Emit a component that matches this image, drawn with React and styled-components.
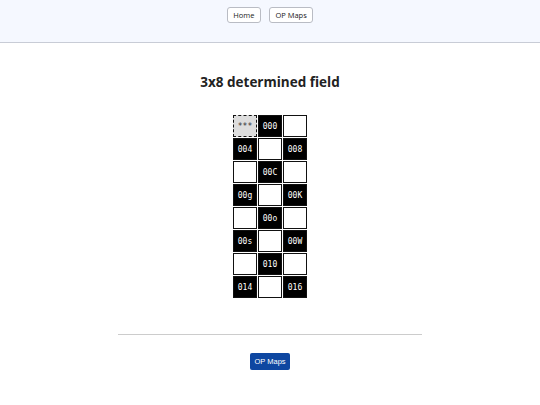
import React from 'react'
import styled, { createGlobalStyle } from 'styled-components'

const GlobalStyle = createGlobalStyle`
    body {
        margin: 0;
        background: #fff;
        font-family: "Open Sans", "Noto Sans", sans-serif;
    }
`
const Header = styled.header`
    display: flex;
    justify-content: center;
    align-items: flex-start;
    gap: 8px;
    height: 43px;
    padding-top: 7px;
    box-sizing: border-box;
    background: #f5f8ff;
    border-bottom: 1px solid #c8ccd6;
`
const NavButton = styled.button`
    height: 14px;
    box-sizing: content-box;
    padding: 0 5.5px;
    border: 1px solid #b9bcc4;
    border-radius: 3px;
    background: #fff;
    color: #222;
    font-family: "Open Sans", sans-serif;
    font-size: 7.5px;
    line-height: 14px;
`
const Main = styled.main`
    display: flex;
    flex-direction: column;
    align-items: center;
`
const Title = styled.h1`
    margin: 28px 0 0;
    font-size: 13.5px;
    line-height: 22px;
    font-weight: 700;
    color: #222;
`
const Field = styled.div`
    margin-top: 22px;
    display: grid;
    grid-template-columns: repeat(3, 24px);
    grid-auto-rows: 22px;
    gap: 1px;
`
const Cell = styled.div`
    box-sizing: border-box;
    display: flex;
    align-items: center;
    justify-content: center;
    font-family: "DejaVu Sans Mono", monospace;
    font-size: 8px;
    border: 1px ${p => (p.$mod === 'start' ? 'dashed' : 'solid')} #111;
    background: ${p => (p.$mod === 'on' ? '#000' : p.$mod === 'start' ? '#ddd' : '#fff')};
    color: ${p => (p.$mod === 'on' ? '#fff' : '#333')};
`
const Rule = styled.hr`
    width: 304px;
    margin: 36px 0 0;
    border: 0;
    border-top: 1px solid #ccc;
`
const MapsButton = styled.button`
    margin-top: 18px;
    height: 17px;
    box-sizing: content-box;
    padding: 0 4.5px;
    border: 0;
    border-radius: 2px;
    background: #0e47a1;
    color: #fff;
    font-family: "Liberation Sans", Arial, sans-serif;
    font-size: 7.5px;
    line-height: 17px;
`

const cells = [
    ['***', 'start'], ['000', 'on'], ['', 'off'],
    ['004', 'on'], ['', 'off'], ['008', 'on'],
    ['', 'off'], ['00C', 'on'], ['', 'off'],
    ['00g', 'on'], ['', 'off'], ['00K', 'on'],
    ['', 'off'], ['00o', 'on'], ['', 'off'],
    ['00s', 'on'], ['', 'off'], ['00W', 'on'],
    ['', 'off'], ['010', 'on'], ['', 'off'],
    ['014', 'on'], ['', 'off'], ['016', 'on'],
]

export default function App() {
    return (
        <>
            <GlobalStyle />
            <Header>
                <NavButton>Home</NavButton>
                <NavButton>OP Maps</NavButton>
            </Header>
            <Main>
                <Title>3x8 determined field</Title>
                <Field>
                    {cells.map(([label, mod], i) => (
                        <Cell key={i} $mod={mod}>
                            {label}
                        </Cell>
                    ))}
                </Field>
                <Rule />
                <MapsButton>OP Maps</MapsButton>
            </Main>
        </>
    )
}
